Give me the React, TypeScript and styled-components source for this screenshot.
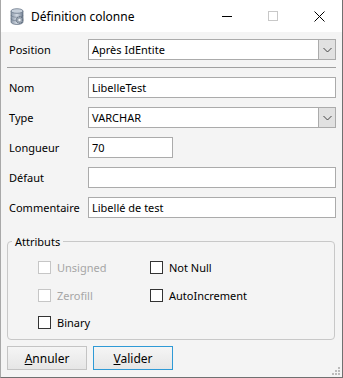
import React from "react";
import styled, { createGlobalStyle } from "styled-components";

const GlobalStyle = createGlobalStyle`
  html, body {
    margin: 0;
    padding: 0;
    background: #ffffff;
  }
  body {
    font-family: "Noto Sans", "Liberation Sans", sans-serif;
    font-size: 11px;
    color: #000;
  }
`;

type Check = { label: string; disabled?: boolean };

const checks: Check[] = [
  { label: "Unsigned", disabled: true },
  { label: "Not Null" },
  { label: "Zerofill", disabled: true },
  { label: "AutoIncrement" },
  { label: "Binary" },
];

const Window = styled.div`
  width: 343px;
  height: 378px;
  box-sizing: border-box;
  display: flex;
  flex-direction: column;
  background: #f4f4f4;
  border-right: 1px solid #707070;
  border-bottom: 1px solid #707070;
  border-left: 1px solid #a8a8a8;
  overflow: hidden;
`;

const TitleBar = styled.div`
  height: 32px;
  flex: none;
  display: flex;
  align-items: center;
  background: #fff;
  margin-left: -1px;
  padding-left: 10px;
`;

const Title = styled.span`
  margin-left: 7px;
  font-size: 12px;
  color: #000;
  flex: 1;
`;

const Caption = styled.div`
  width: 46px;
  height: 32px;
  display: flex;
  align-items: center;
  justify-content: center;
`;

const Body = styled.div`
  flex: 1;
  display: flex;
  flex-direction: column;
  padding: 7px 6px 0 6px;
  position: relative;
`;

const Row = styled.div<{ $gap?: number }>`
  display: grid;
  grid-template-columns: 81px 1fr;
  align-items: center;
  height: 21px;
  margin-bottom: ${({ $gap }) => $gap ?? 9}px;
`;

const Label = styled.span`
  padding-left: 2px;
`;

const Input = styled.div<{ $width?: number }>`
  box-sizing: border-box;
  height: 21px;
  width: ${({ $width }) => ($width ? `${$width}px` : "100%")};
  background: #fff;
  border: 1px solid #ababab;
  padding-left: 3px;
  display: flex;
  align-items: center;
`;

const Select = styled(Input)`
  padding-right: 0;
  justify-content: space-between;
`;

const DropButton = styled.div`
  width: 17px;
  height: 19px;
  box-sizing: border-box;
  background: #e1e1e1;
  border-left: 1px solid #ababab;
  display: flex;
  align-items: center;
  justify-content: center;
`;

const Separator = styled.div`
  height: 1px;
  background: #a0a0a0;
  margin: 0 0 9px 0;
`;

const Group = styled.fieldset`
  margin: 16px 1px 0 0;
  padding: 0 0 0 4px;
  height: 106px;
  box-sizing: border-box;
  border: 1px solid #c8c8c8;
  border-radius: 4px;
`;

const Legend = styled.legend`
  padding: 0 3px;
  margin: 0;
`;

const CheckGrid = styled.div`
  display: grid;
  grid-template-columns: 112px 1fr;
  grid-template-rows: 28px 27px 14px;
  padding: 11px 0 0 26px;
`;

const CheckRow = styled.label<{ $disabled?: boolean }>`
  display: flex;
  align-items: center;
  gap: 6px;
  height: 14px;
  color: ${({ $disabled }) => ($disabled ? "#a6a6a6" : "#000")};
`;

const Box = styled.span<{ $disabled?: boolean }>`
  width: 13px;
  height: 13px;
  box-sizing: border-box;
  background: #fff;
  border: 1px solid ${({ $disabled }) => ($disabled ? "#c6c6c6" : "#333")};
`;

const Buttons = styled.div`
  display: flex;
  gap: 6px;
  margin-top: 6px;
`;

const Button = styled.div<{ $primary?: boolean }>`
  width: 80px;
  height: 24px;
  box-sizing: border-box;
  display: flex;
  align-items: center;
  justify-content: center;
  font-size: 12px;
  border: 1px solid ${({ $primary }) => ($primary ? "#2f9ad6" : "#c4c4c4")};
  background: linear-gradient(#f5f5f5, #e6e6e6);
  u {
    text-decoration-thickness: 1px;
  }
`;

const Grip = styled.svg`
  position: absolute;
  right: 1px;
  bottom: 1px;
`;

const Chevron = () => (
  <svg width="9" height="6" viewBox="0 0 9 6">
    <path d="M0.5 1 L4.5 5 L8.5 1" stroke="#444" strokeWidth="1" fill="none" />
  </svg>
);

const DbIcon = () => (
  <svg width="14" height="17" viewBox="0 0 14 17">
    <defs>
      <linearGradient id="cyl" x1="0" x2="1">
        <stop offset="0" stopColor="#8a97a8" />
        <stop offset="0.5" stopColor="#d5dce5" />
        <stop offset="1" stopColor="#6f7d90" />
      </linearGradient>
    </defs>
    <path d="M1 3 V14 A6 2.5 0 0 0 13 14 V3 Z" fill="url(#cyl)" stroke="#5c6a7c" strokeWidth="0.7" />
    <ellipse cx="7" cy="3" rx="6" ry="2.3" fill="#c7d0db" stroke="#5c6a7c" strokeWidth="0.7" />
    <path d="M1 7 A6 2.3 0 0 0 13 7 M1 10.5 A6 2.3 0 0 0 13 10.5" stroke="#5c6a7c" strokeWidth="0.5" fill="none" />
    <circle cx="9.5" cy="12" r="3.3" fill="#9aa5b2" stroke="#4a5566" strokeWidth="0.8" strokeDasharray="1.2 0.9" />
    <circle cx="9.5" cy="12" r="1.2" fill="#eef1f4" />
  </svg>
);

const CheckItem = ({ label, disabled }: Check) => (
  <CheckRow $disabled={disabled}>
    <Box $disabled={disabled} />
    {label}
  </CheckRow>
);

const App = () => {
  return (
    <>
      <GlobalStyle />
      <Window>
        <TitleBar>
          <DbIcon />
          <Title>Définition colonne</Title>
          <Caption>
            <svg width="10" height="10" viewBox="0 0 10 10">
              <path d="M0 5.5 H10" stroke="#000" strokeWidth="1" />
            </svg>
          </Caption>
          <Caption>
            <svg width="10" height="10" viewBox="0 0 10 10">
              <rect x="0.5" y="0.5" width="9" height="9" stroke="#c8c8c8" fill="none" />
            </svg>
          </Caption>
          <Caption>
            <svg width="11" height="11" viewBox="0 0 11 11">
              <path d="M0.5 0.5 L10.5 10.5 M10.5 0.5 L0.5 10.5" stroke="#000" strokeWidth="1" />
            </svg>
          </Caption>
        </TitleBar>
        <Body>
          <Row $gap={7}>
            <Label>Position</Label>
            <Select>
              Après IdEntite
              <DropButton>
                <Chevron />
              </DropButton>
            </Select>
          </Row>
          <Separator />
          <Row>
            <Label>Nom</Label>
            <Input>LibelleTest</Input>
          </Row>
          <Row>
            <Label>Type</Label>
            <Select>
              VARCHAR
              <DropButton>
                <Chevron />
              </DropButton>
            </Select>
          </Row>
          <Row>
            <Label>Longueur</Label>
            <Input $width={85}>70</Input>
          </Row>
          <Row>
            <Label>Défaut</Label>
            <Input />
          </Row>
          <Row $gap={0}>
            <Label>Commentaire</Label>
            <Input>Libellé de test</Input>
          </Row>
          <Group>
            <Legend>Attributs</Legend>
            <CheckGrid>
              {checks.map((c) => (
                <CheckItem key={c.label} {...c} />
              ))}
            </CheckGrid>
          </Group>
          <Buttons>
            <Button>
              <span>
                <u>A</u>nnuler
              </span>
            </Button>
            <Button $primary>
              <span>
                <u>V</u>alider
              </span>
            </Button>
          </Buttons>
          <Grip width="10" height="10" viewBox="0 0 10 10">
            {[
              [7, 1],
              [4, 4],
              [7, 4],
              [1, 7],
              [4, 7],
              [7, 7],
            ].map(([x, y]) => (
              <rect key={`${x}-${y}`} x={x} y={y} width="2" height="2" fill="#bcbcbc" />
            ))}
          </Grip>
        </Body>
      </Window>
    </>
  );
};

export default App;
